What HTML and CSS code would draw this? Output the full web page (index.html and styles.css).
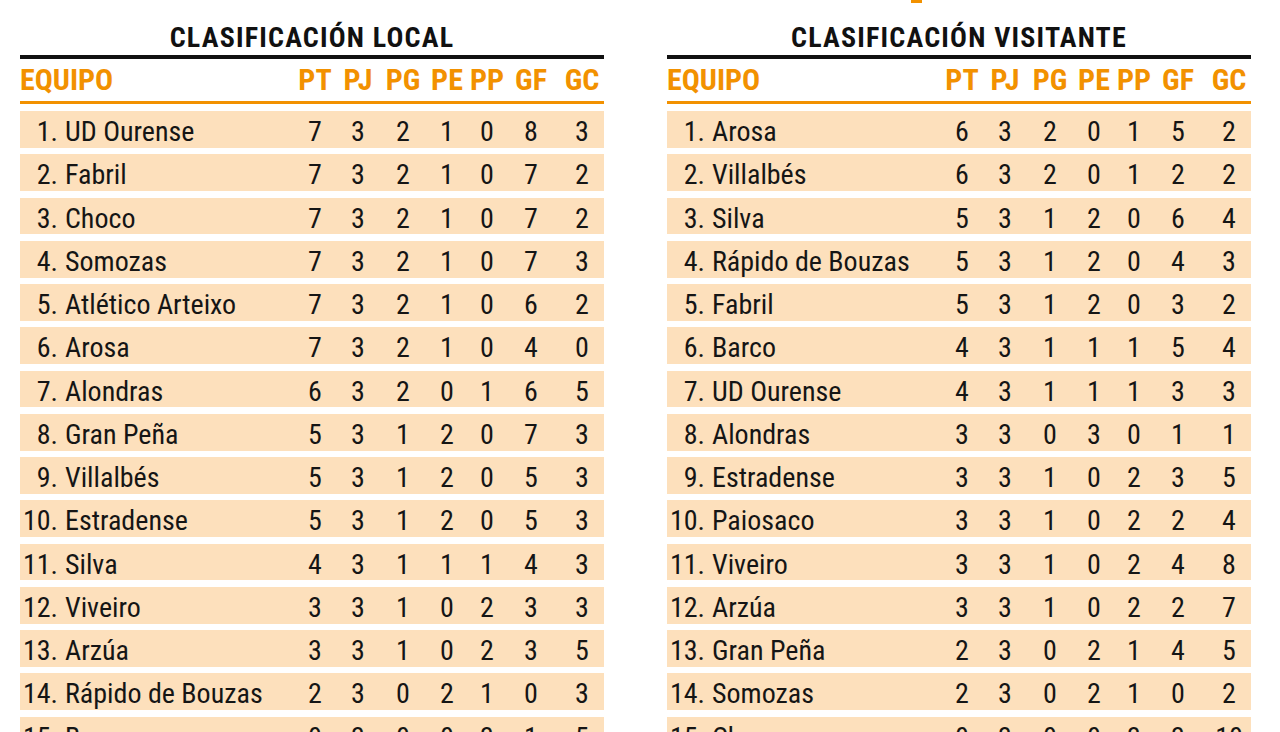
FILE: index.html
```html
<!DOCTYPE html>
<html lang="es">
<head>
<meta charset="utf-8">
<title>Clasificación</title>
<link rel="stylesheet" href="styles.css">
</head>
<body>
<div class="mark"></div>
<div class="page">
  <section class="standings">
    <h2 class="title">CLASIFICACIÓN LOCAL</h2>
    <div class="row head">
      <div class="team">EQUIPO</div><div>PT</div><div>PJ</div><div>PG</div><div>PE</div><div>PP</div><div>GF</div><div class="gc">GC</div>
    </div>
    <div class="rows">
      <div class="row"><div class="team"><span class="rank">1.</span><span>UD Ourense</span></div><div>7</div><div>3</div><div>2</div><div>1</div><div>0</div><div>8</div><div class="gc">3</div></div>
      <div class="row"><div class="team"><span class="rank">2.</span><span>Fabril</span></div><div>7</div><div>3</div><div>2</div><div>1</div><div>0</div><div>7</div><div class="gc">2</div></div>
      <div class="row"><div class="team"><span class="rank">3.</span><span>Choco</span></div><div>7</div><div>3</div><div>2</div><div>1</div><div>0</div><div>7</div><div class="gc">2</div></div>
      <div class="row"><div class="team"><span class="rank">4.</span><span>Somozas</span></div><div>7</div><div>3</div><div>2</div><div>1</div><div>0</div><div>7</div><div class="gc">3</div></div>
      <div class="row"><div class="team"><span class="rank">5.</span><span>Atlético Arteixo</span></div><div>7</div><div>3</div><div>2</div><div>1</div><div>0</div><div>6</div><div class="gc">2</div></div>
      <div class="row"><div class="team"><span class="rank">6.</span><span>Arosa</span></div><div>7</div><div>3</div><div>2</div><div>1</div><div>0</div><div>4</div><div class="gc">0</div></div>
      <div class="row"><div class="team"><span class="rank">7.</span><span>Alondras</span></div><div>6</div><div>3</div><div>2</div><div>0</div><div>1</div><div>6</div><div class="gc">5</div></div>
      <div class="row"><div class="team"><span class="rank">8.</span><span>Gran Peña</span></div><div>5</div><div>3</div><div>1</div><div>2</div><div>0</div><div>7</div><div class="gc">3</div></div>
      <div class="row"><div class="team"><span class="rank">9.</span><span>Villalbés</span></div><div>5</div><div>3</div><div>1</div><div>2</div><div>0</div><div>5</div><div class="gc">3</div></div>
      <div class="row"><div class="team"><span class="rank">10.</span><span>Estradense</span></div><div>5</div><div>3</div><div>1</div><div>2</div><div>0</div><div>5</div><div class="gc">3</div></div>
      <div class="row"><div class="team"><span class="rank">11.</span><span>Silva</span></div><div>4</div><div>3</div><div>1</div><div>1</div><div>1</div><div>4</div><div class="gc">3</div></div>
      <div class="row"><div class="team"><span class="rank">12.</span><span>Viveiro</span></div><div>3</div><div>3</div><div>1</div><div>0</div><div>2</div><div>3</div><div class="gc">3</div></div>
      <div class="row"><div class="team"><span class="rank">13.</span><span>Arzúa</span></div><div>3</div><div>3</div><div>1</div><div>0</div><div>2</div><div>3</div><div class="gc">5</div></div>
      <div class="row"><div class="team"><span class="rank">14.</span><span>Rápido de Bouzas</span></div><div>2</div><div>3</div><div>0</div><div>2</div><div>1</div><div>0</div><div class="gc">3</div></div>
      <div class="row"><div class="team"><span class="rank">15.</span><span>Barco</span></div><div>0</div><div>3</div><div>0</div><div>0</div><div>3</div><div>1</div><div class="gc">5</div></div>
    </div>
  </section>
  <section class="standings">
    <h2 class="title">CLASIFICACIÓN VISITANTE</h2>
    <div class="row head">
      <div class="team">EQUIPO</div><div>PT</div><div>PJ</div><div>PG</div><div>PE</div><div>PP</div><div>GF</div><div class="gc">GC</div>
    </div>
    <div class="rows">
      <div class="row"><div class="team"><span class="rank">1.</span><span>Arosa</span></div><div>6</div><div>3</div><div>2</div><div>0</div><div>1</div><div>5</div><div class="gc">2</div></div>
      <div class="row"><div class="team"><span class="rank">2.</span><span>Villalbés</span></div><div>6</div><div>3</div><div>2</div><div>0</div><div>1</div><div>2</div><div class="gc">2</div></div>
      <div class="row"><div class="team"><span class="rank">3.</span><span>Silva</span></div><div>5</div><div>3</div><div>1</div><div>2</div><div>0</div><div>6</div><div class="gc">4</div></div>
      <div class="row"><div class="team"><span class="rank">4.</span><span>Rápido de Bouzas</span></div><div>5</div><div>3</div><div>1</div><div>2</div><div>0</div><div>4</div><div class="gc">3</div></div>
      <div class="row"><div class="team"><span class="rank">5.</span><span>Fabril</span></div><div>5</div><div>3</div><div>1</div><div>2</div><div>0</div><div>3</div><div class="gc">2</div></div>
      <div class="row"><div class="team"><span class="rank">6.</span><span>Barco</span></div><div>4</div><div>3</div><div>1</div><div>1</div><div>1</div><div>5</div><div class="gc">4</div></div>
      <div class="row"><div class="team"><span class="rank">7.</span><span>UD Ourense</span></div><div>4</div><div>3</div><div>1</div><div>1</div><div>1</div><div>3</div><div class="gc">3</div></div>
      <div class="row"><div class="team"><span class="rank">8.</span><span>Alondras</span></div><div>3</div><div>3</div><div>0</div><div>3</div><div>0</div><div>1</div><div class="gc">1</div></div>
      <div class="row"><div class="team"><span class="rank">9.</span><span>Estradense</span></div><div>3</div><div>3</div><div>1</div><div>0</div><div>2</div><div>3</div><div class="gc">5</div></div>
      <div class="row"><div class="team"><span class="rank">10.</span><span>Paiosaco</span></div><div>3</div><div>3</div><div>1</div><div>0</div><div>2</div><div>2</div><div class="gc">4</div></div>
      <div class="row"><div class="team"><span class="rank">11.</span><span>Viveiro</span></div><div>3</div><div>3</div><div>1</div><div>0</div><div>2</div><div>4</div><div class="gc">8</div></div>
      <div class="row"><div class="team"><span class="rank">12.</span><span>Arzúa</span></div><div>3</div><div>3</div><div>1</div><div>0</div><div>2</div><div>2</div><div class="gc">7</div></div>
      <div class="row"><div class="team"><span class="rank">13.</span><span>Gran Peña</span></div><div>2</div><div>3</div><div>0</div><div>2</div><div>1</div><div>4</div><div class="gc">5</div></div>
      <div class="row"><div class="team"><span class="rank">14.</span><span>Somozas</span></div><div>2</div><div>3</div><div>0</div><div>2</div><div>1</div><div>0</div><div class="gc">2</div></div>
      <div class="row"><div class="team"><span class="rank">15.</span><span>Choco</span></div><div>0</div><div>3</div><div>0</div><div>0</div><div>3</div><div>3</div><div class="gc">10</div></div>
    </div>
  </section>
</div>
</body>
</html>
```
FILE: styles.css
```css
* { box-sizing: border-box; }
html, body {
  margin: 0;
  padding: 0;
  background: #ffffff;
}
body {
  width: 1280px;
  height: 732px;
  overflow: hidden;
  position: relative;
  font-family: "Roboto Condensed", "Roboto", "Liberation Sans", sans-serif;
  color: #151515;
}
.mark {
  position: absolute;
  left: 911px;
  top: 0;
  width: 11px;
  height: 3px;
  background: #f29100;
}
.page {
  display: flex;
  gap: 63px;
  padding-left: 20px;
}
.standings {
  width: 584px;
  flex: none;
}
.title {
  margin: 0;
  height: 59px;
  padding-top: 23px;
  line-height: 30px;
  font-size: 28px;
  font-weight: 700;
  letter-spacing: 1.2px;
  text-align: center;
  color: #111111;
  border-bottom: 4px solid #111111;
}
.row {
  display: grid;
  grid-template-columns: 274px 42px 44px 46px 42px 38px 50px 48px;
  align-items: center;
  text-align: center;
}
.head {
  height: 45px;
  padding-bottom: 3px;
  border-bottom: 3px solid #f29100;
  color: #f29100;
  font-size: 30px;
  font-weight: 700;
  line-height: 42px;
}
.head .team {
  text-align: left;
}
.rows {
  padding-top: 7px;
}
.rows .row {
  height: 36.75px;
  margin-bottom: 6.5px;
  padding-top: 5px;
  background: #fde0bc;
  font-size: 28px;
  line-height: 32px;
}
.team {
  display: flex;
  align-items: center;
  text-align: left;
  white-space: nowrap;
}
.rank {
  width: 38px;
  flex: none;
  text-align: right;
  margin-right: 7px;
}
.gc {
  padding-left: 4px;
}
```
